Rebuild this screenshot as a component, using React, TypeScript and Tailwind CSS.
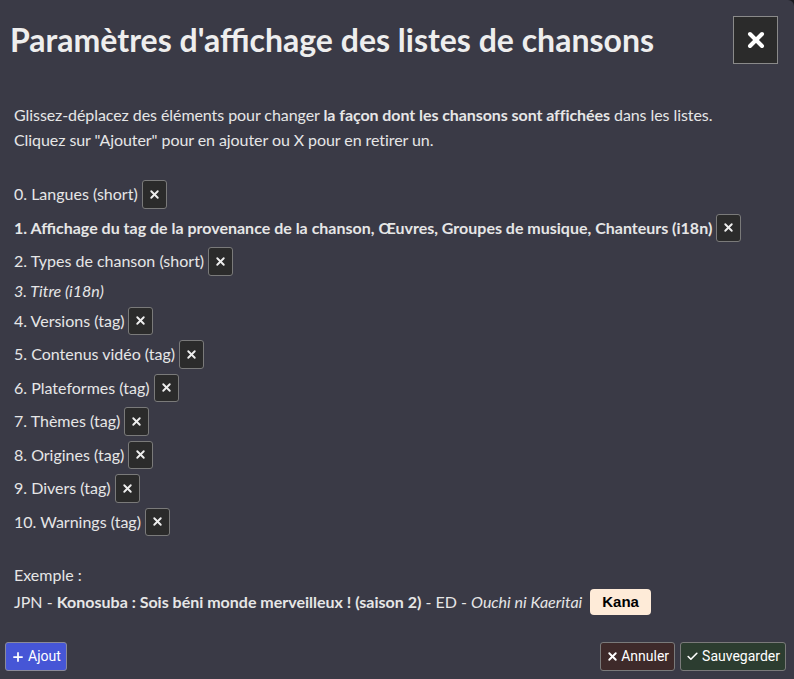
import { X, Plus, Check } from "lucide-react";

const items = [
  { label: "0. Langues (short)", removable: true },
  { label: "1. Affichage du tag de la provenance de la chanson, Œuvres, Groupes de musique, Chanteurs (i18n)", removable: true, bold: true },
  { label: "2. Types de chanson (short)", removable: true },
  { label: "3. Titre (i18n)", removable: false, italic: true },
  { label: "4. Versions (tag)", removable: true },
  { label: "5. Contenus vidéo (tag)", removable: true },
  { label: "6. Plateformes (tag)", removable: true },
  { label: "7. Thèmes (tag)", removable: true },
  { label: "8. Origines (tag)", removable: true },
  { label: "9. Divers (tag)", removable: true },
  { label: "10. Warnings (tag)", removable: true },
];

function RemoveButton() {
  return (
    <button className="w-[25px] h-[28.5px] flex items-center justify-center bg-[#2b2b2b] border border-[#7a7a7a] rounded-[3px] text-[#eee]">
      <X size={13} strokeWidth={3.5} />
    </button>
  );
}

export default function App() {
  return (
    <div className="w-[794px] h-[679px] bg-[#1a1a1f]">
      <div className="w-full h-full bg-[#3a3a46] rounded-tr-[6px] flex flex-col text-[#e6e6e6] font-['Lato',sans-serif]">
        {/* Header */}
        <div className="flex items-start justify-between pl-[10px] pr-[16px] pt-[16px]">
          <h1 className="text-[32px] font-bold leading-[48px] text-[#eeeeee]">
            Paramètres d'affichage des listes de chansons
          </h1>
          <button className="w-[45px] h-[48px] flex items-center justify-center bg-[#2b2b2b] border border-[#8a8a8a] text-white">
            <X size={24} strokeWidth={4} />
          </button>
        </div>

        {/* Body */}
        <div className="px-[14px] pt-[38px] text-[16px]">
          <p className="leading-[25px] tracking-[-0.07px]">
            Glissez-déplacez des éléments pour changer{" "}
            <b>la façon dont les chansons sont affichées</b> dans les listes.
            <br />
            Cliquez sur "Ajouter" pour en ajouter ou X pour en retirer un.
          </p>

          <div className="mt-[28px] flex flex-col gap-[5px]">
            {items.map((it) => (
              <div
                key={it.label}
                className={"flex gap-[4px] " + (it.removable ? "items-center h-[28.5px]" : "items-start h-[21px] leading-[20px]")}
              >
                <span className={(it.bold ? "font-bold " : "") + (it.italic ? "italic" : "")}>
                  {it.label}
                </span>
                {it.removable && <RemoveButton />}
              </div>
            ))}
          </div>

          <div className="mt-[25px] leading-[27px]">
            <div>Exemple :</div>
            <div className="flex items-center">
              <span>
                JPN - <b>Konosuba : Sois béni monde merveilleux ! (saison 2)</b> - ED -{" "}
                <i>Ouchi ni Kaeritai</i>
              </span>
              <span className="ml-[8px] px-[12px] h-[26px] flex items-center rounded-[4px] bg-[#feebd8] text-black font-bold text-[15px] font-['Liberation_Sans',Arial,sans-serif]">
                Kana
              </span>
            </div>
          </div>
        </div>

        {/* Footer */}
        <div className="mt-auto flex items-center justify-between pl-[5px] pr-[8px] pb-[8px] font-['Roboto',Arial,sans-serif] text-[14px] text-white">
          <button className="h-[29px] px-[5px] flex items-center gap-[3px] bg-[#4656d6] border border-[#8a8a9a] rounded-[3px]">
            <Plus size={14} strokeWidth={3} />
            Ajout
          </button>
          <div className="flex items-center gap-[5px]">
            <button className="h-[29px] px-[5px] flex items-center gap-[2px] bg-[#3e2a2a] border border-[#7a7a7a] rounded-[3px]">
              <X size={13} strokeWidth={3.5} />
              Annuler
            </button>
            <button className="h-[29px] px-[5px] flex items-center gap-[3px] bg-[#2c3d30] border border-[#7a7a7a] rounded-[3px]">
              <Check size={13} strokeWidth={3} />
              Sauvegarder
            </button>
          </div>
        </div>
      </div>
    </div>
  );
}
